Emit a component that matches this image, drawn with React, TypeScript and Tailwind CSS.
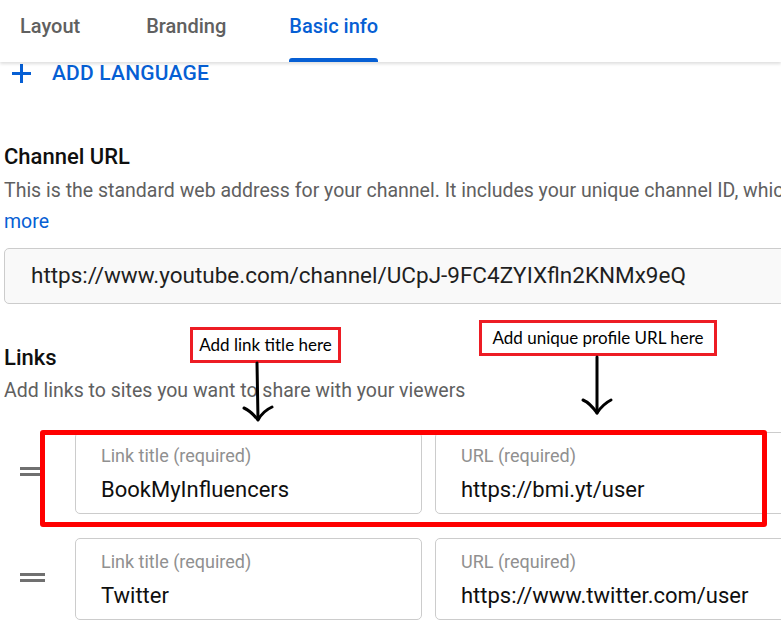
import React from "react";

const Handle = () => (
  <div className="flex flex-col gap-[3px] w-[25px] -mt-[4px]">
    <div className="h-[3px] bg-[#707070]" />
    <div className="h-[3px] bg-[#707070]" />
  </div>
);

const Field = ({ label, value, w }: { label: string; value: string; w: string }) => (
  <div className={`${w} h-[82px] shrink-0 rounded-[5px] border border-[#cccccc] bg-white pl-[25px] pt-[11px]`}>
    <div className="text-[18px] leading-[24px] text-[#909090]">{label}</div>
    <div className="mt-[8px] text-[22px] leading-[28px] text-[#0f0f0f]">{value}</div>
  </div>
);

const LinkRow = ({ title, url }: { title: string; url: string }) => (
  <div className="flex items-center pl-[20px]">
    <Handle />
    <div className="ml-[30px] flex gap-[13px]">
      <Field label="Link title (required)" value={title} w="w-[347px]" />
      <Field label="URL (required)" value={url} w="w-[370px]" />
    </div>
  </div>
);

export default function App() {
  return (
    <div className="relative w-[781px] h-[642px] overflow-hidden bg-white font-['Roboto',sans-serif]">
      {/* Tab bar */}
      <div className="relative z-10 flex h-[62px] bg-white text-[20px] font-medium shadow-[0_2px_3px_rgba(0,0,0,0.13)]">
        <div className="ml-[20px] pt-[14px] leading-[24px] text-[#606060]">Layout</div>
        <div className="ml-[66px] pt-[14px] leading-[24px] text-[#606060]">Branding</div>
        <div className="ml-[63px] flex h-full flex-col justify-between">
          <div className="pt-[14px] leading-[24px] text-[#065fd4]">Basic info</div>
          <div className="h-[4px] rounded-t-[3px] bg-[#065fd4]" />
        </div>
      </div>

      {/* Content */}
      <div className="w-[840px]">
        <div className="flex h-[22px] items-center pl-[11px] text-[#065fd4]">
          <svg width="21" height="21" viewBox="0 0 21 21">
            <path d="M10.5 1v19M1 10.5h19" stroke="#065fd4" strokeWidth="3" />
          </svg>
          <span className="ml-[20px] text-[21px] font-medium leading-[22px] tracking-[0.2px]">ADD LANGUAGE</span>
        </div>

        <div className="mt-[59px] pl-[4px] text-[22px] font-medium leading-[28px] text-[#0f0f0f]">Channel URL</div>
        <div className="mt-[8px] whitespace-nowrap pl-[4px] text-[19.5px] leading-[24px] text-[#606060]">
          This is the standard web address for your channel. It includes your unique channel ID, whic
        </div>
        <div className="mt-[7px] pl-[4px] text-[19.5px] leading-[24px] text-[#065fd4]">more</div>

        <div className="ml-[4px] mt-[14px] flex h-[56px] items-center rounded-[5px] border border-[#cccccc] bg-[#f9f9f9] pl-[26px]">
          <span className="text-[22.5px] text-[#1f1f1f]">https://www.youtube.com/channel/UCpJ-9FC4ZYIXfln2KNMx9eQ</span>
        </div>

        <div className="mt-[40px] pl-[4px] text-[22px] font-medium leading-[28px] text-[#0f0f0f]">Links</div>
        <div className="mt-[7px] pl-[4px] text-[19.5px] leading-[24px] text-[#606060]">
          Add links to sites you want to share with your viewers
        </div>

        <div className="mt-[29px] flex flex-col gap-[24px]">
          <LinkRow title="BookMyInfluencers" url="https://bmi.yt/user" />
          <LinkRow title="Twitter" url="https://www.twitter.com/user" />
        </div>
      </div>

      {/* Annotations */}
      <div className="absolute left-[40px] top-[430px] h-[97px] w-[727px] rounded-[3px] border-[5px] border-[#ff0000]" />

      <div className="absolute left-[190px] top-[327px] flex h-[36px] w-[151px] items-center justify-center border-[3px] border-[#ed1c24] bg-white font-['Lato',sans-serif] text-[17px] text-black">
        Add link title here
      </div>
      <div className="absolute left-[479px] top-[320px] flex h-[36px] w-[238px] items-center justify-center border-[3px] border-[#ed1c24] bg-white font-['Lato',sans-serif] text-[17px] text-black">
        Add unique profile URL here
      </div>

      <svg className="pointer-events-none absolute left-0 top-0" width="781" height="642">
        <g fill="none" stroke="#000" strokeWidth="3" strokeLinecap="round" strokeLinejoin="round">
          <path d="M257 363 L258 419" />
          <path d="M244 408 Q251 411 258 420 Q263 411 272 407" />
          <path d="M597 357 L597 413" />
          <path d="M583 400 Q590 403 597 413 Q603 404 611 400" />
        </g>
      </svg>
    </div>
  );
}
